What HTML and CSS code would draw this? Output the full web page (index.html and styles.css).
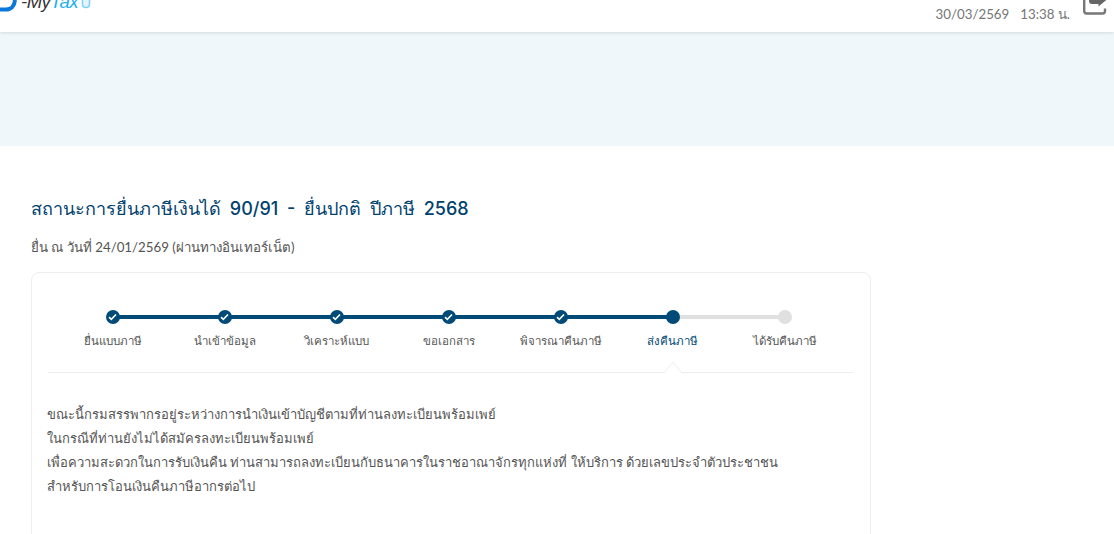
FILE: index.html
```html
<!DOCTYPE html>
<html lang="th">
<head>
  <meta charset="UTF-8">
  <title>My Tax</title>
  <link rel="stylesheet" href="styles.css">
</head>
<body>

  <header class="topbar">
    <div class="logo">
      <svg class="logo-mark" width="18" height="13" viewBox="0 0 18 13">
        <path d="M-2 9.500 H6 C11 9.500 14.500 6 15 0" fill="none" stroke="#0a78d8" stroke-width="4"/>
      </svg>
      <span class="logo-dash">-</span><span class="logo-my">My</span><span class="logo-tax">Tax</span>
      <svg class="logo-cup" width="10" height="9" viewBox="0 0 10 9">
        <path d="M1.500 0 V4.500 Q1.500 7.500 5 7.500 Q8.500 7.500 8.500 4.500 V0" fill="#e3f4fc" stroke="#7fd0f5" stroke-width="1.500"/>
      </svg>
    </div>
    <div class="session">
      <div class="session-time">
        <span>30/03/2569</span>
        <span>13:38 น.</span>
      </div>
      <svg class="logout" width="25" height="16" viewBox="0 0 25 16">
        <path d="M1.200 0 V12 Q1.200 14.500 3.700 14.500 H19.500 Q22 14.500 22 12 V9.500" fill="none" stroke="#777" stroke-width="2.400"/>
        <path d="M6 0 H24.500 L15.500 7.500 V5 H9 Q6 5 6 2 Z" fill="#666"/>
      </svg>
    </div>
  </header>

  <div class="band"></div>

  <main class="content">
    <h1 class="page-title">สถานะการยื่นภาษีเงินได้ 90/91 - ยื่นปกติ ปีภาษี 2568</h1>
    <p class="filed-on">ยื่น ณ วันที่ 24/01/2569 (ผ่านทางอินเทอร์เน็ต)</p>

    <section class="card">
      <ol class="steps">
        <li class="step done">
          <span class="dot"><svg width="9" height="8" viewBox="0 0 9 8"><path d="M1 4.200 L3.300 6.400 L8 1.500" fill="none" stroke="#fff" stroke-width="1.600"/></svg></span>
          <span class="step-name">ยื่นแบบภาษี</span>
        </li>
        <li class="step done">
          <span class="dot"><svg width="9" height="8" viewBox="0 0 9 8"><path d="M1 4.200 L3.300 6.400 L8 1.500" fill="none" stroke="#fff" stroke-width="1.600"/></svg></span>
          <span class="step-name">นำเข้าข้อมูล</span>
        </li>
        <li class="step done">
          <span class="dot"><svg width="9" height="8" viewBox="0 0 9 8"><path d="M1 4.200 L3.300 6.400 L8 1.500" fill="none" stroke="#fff" stroke-width="1.600"/></svg></span>
          <span class="step-name">วิเคราะห์แบบ</span>
        </li>
        <li class="step done">
          <span class="dot"><svg width="9" height="8" viewBox="0 0 9 8"><path d="M1 4.200 L3.300 6.400 L8 1.500" fill="none" stroke="#fff" stroke-width="1.600"/></svg></span>
          <span class="step-name">ขอเอกสาร</span>
        </li>
        <li class="step done">
          <span class="dot"><svg width="9" height="8" viewBox="0 0 9 8"><path d="M1 4.200 L3.300 6.400 L8 1.500" fill="none" stroke="#fff" stroke-width="1.600"/></svg></span>
          <span class="step-name">พิจารณาคืนภาษี</span>
        </li>
        <li class="step current">
          <span class="dot"></span>
          <span class="step-name">ส่งคืนภาษี</span>
          <svg class="pointer" width="20" height="12" viewBox="0 0 20 12">
            <path d="M1 12 L10 1 L19 12" fill="#fff" stroke="#eee"/>
          </svg>
        </li>
        <li class="step todo">
          <span class="dot"></span>
          <span class="step-name">ได้รับคืนภาษี</span>
        </li>
      </ol>

      <div class="message">
        <p>ขณะนี้กรมสรรพากรอยู่ระหว่างการนำเงินเข้าบัญชีตามที่ท่านลงทะเบียนพร้อมเพย์</p>
        <p>ในกรณีที่ท่านยังไม่ได้สมัครลงทะเบียนพร้อมเพย์</p>
        <p>เพื่อความสะดวกในการรับเงินคืน ท่านสามารถลงทะเบียนกับธนาคารในราชอาณาจักรทุกแห่งที่ ให้บริการ ด้วยเลขประจำตัวประชาชน</p>
        <p>สำหรับการโอนเงินคืนภาษีอากรต่อไป</p>
      </div>
    </section>
  </main>

</body>
</html>
```

FILE: styles.css
```css
html, body {
  height: 534px;
  overflow: hidden;
}

body {
  margin: 0;
  background-color: #fff;
  color: #555;
  font-family: Lato, 'Open Sans', sans-serif;
  font-size: 13px;
}

.topbar {
  height: 32px;
  display: flex;
  justify-content: space-between;
  align-items: flex-end;
  overflow: hidden;
  background-color: #fff;
  box-shadow: 0 1px 3px rgba(0, 0, 0, 0.12);
  position: relative;
}

.logo {
  display: flex;
  align-items: flex-end;
  align-self: flex-start;
  height: 13px;
  width: 100px;
  font-family: 'Liberation Sans', sans-serif;
  font-size: 18.500px;
  font-style: italic;
  letter-spacing: -0.500px;
  line-height: 18px;
  position: relative;
}

.logo-mark {
  position: absolute;
  left: 0;
  top: 0;
}

.logo-dash {
  margin-left: 21px;
  margin-bottom: 2px;
  color: #333;
}

.logo-my {
  margin-bottom: 2px;
  color: #333;
}

.logo-tax {
  margin-bottom: 2px;
  color: #1cb0f0;
}

.logo-cup {
  position: absolute;
  left: 81px;
  top: 0;
}

.session {
  display: flex;
  align-items: flex-end;
  gap: 13px;
  padding-right: 6px;
  height: 100%;
}

.session-time {
  display: flex;
  gap: 11px;
  color: #757575;
  font-size: 13.300px;
  line-height: 20px;
  margin-bottom: 8px;
}

.logout {
  margin-bottom: 17px;
}

.band {
  height: 114px;
  background-color: #f0f7fa;
}

.content {
  padding: 46px 0 0 31px;
  width: 840px;
}

.page-title {
  margin: 0;
  color: #00426e;
  font-family: Inter, 'Noto Sans', sans-serif;
  font-size: 18px;
  font-weight: 500;
  line-height: 34px;
  word-spacing: 4px;
}

.filed-on {
  margin: 11px 0 0;
  font-size: 13.300px;
  line-height: 20px;
}

.card {
  margin-top: 15px;
  height: 300px;
  border: 1px solid #eee;
  border-radius: 8px;
  padding: 0 16px;
}

.steps {
  list-style: none;
  margin: 0;
  padding: 37px 0 0 8.500px;
  height: 62px;
  display: grid;
  grid-template-columns: repeat(7, 112px);
  border-bottom: 1px solid #eee;
  position: relative;
}

.step {
  display: flex;
  flex-direction: column;
  align-items: center;
  position: relative;
}

.step::after {
  content: '';
  position: absolute;
  top: 5px;
  left: 50%;
  width: 100%;
  height: 4px;
  background-color: #004a78;
}

.step:last-child::after {
  display: none;
}

.step.current::after {
  background-color: #e0e0e0;
}

.dot {
  width: 14px;
  height: 14px;
  border-radius: 50%;
  background-color: #004a78;
  display: flex;
  align-items: center;
  justify-content: center;
  position: relative;
  z-index: 1;
}

.todo .dot {
  background-color: #e0e0e0;
}

.step-name {
  margin-top: 7px;
  font-size: 11.500px;
  line-height: 20px;
  white-space: nowrap;
}

.current .step-name {
  color: #004a78;
}

.pointer {
  position: absolute;
  left: 50%;
  top: 51px;
  margin-left: -10px;
}

.message {
  padding-top: 29px;
  margin-left: -1px;
}

.message p {
  margin: 0;
  line-height: 24px;
  font-size: 13px;
}
```
